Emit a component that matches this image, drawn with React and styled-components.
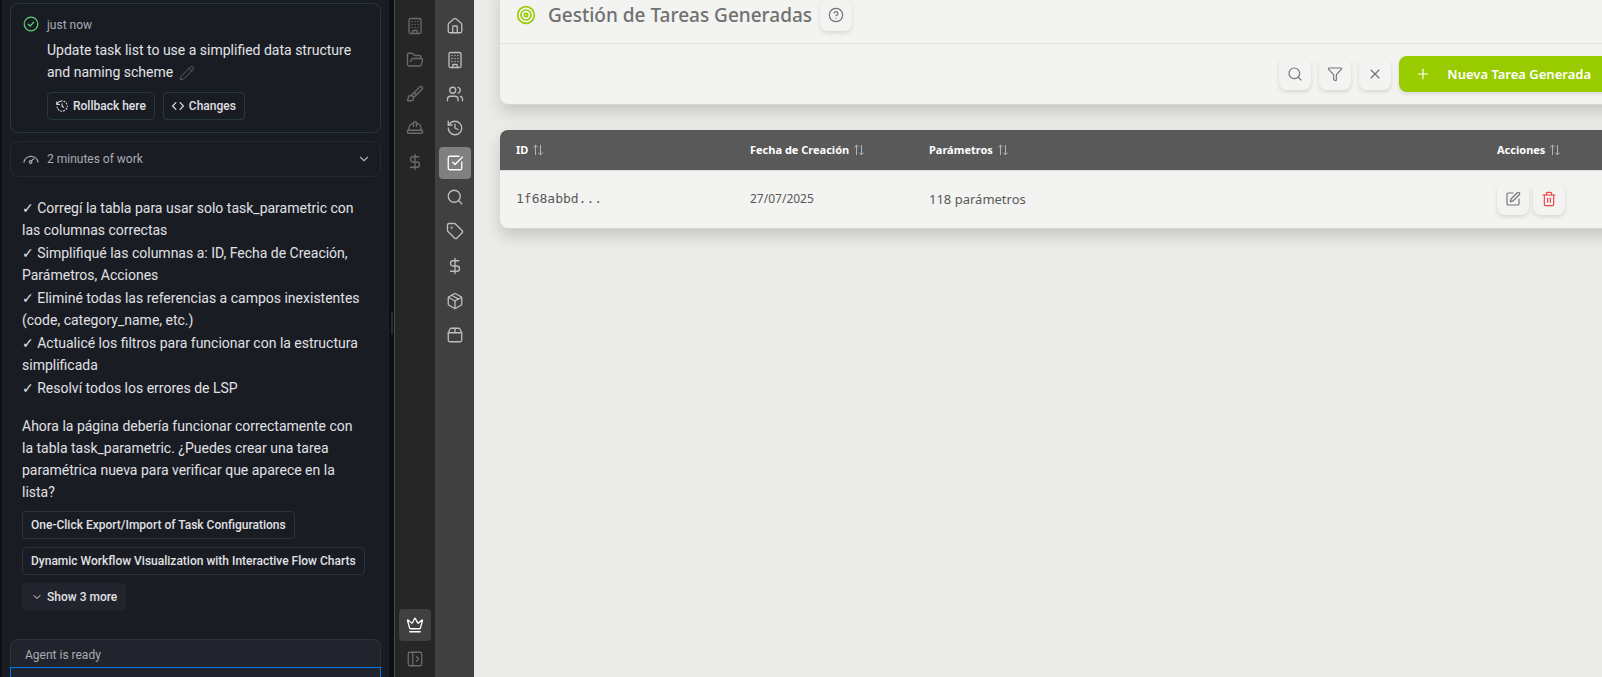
import React from "react";
import styled, { createGlobalStyle, css } from "styled-components";
import {
  Brush, Building, ChevronDown, CircleHelp, Crown, DollarSign, FolderOpen, Funnel, HardHat,
  History, House, Package, Package2, PanelLeftOpen, Pencil, Plus, Search, SquareCheckBig,
  SquarePen, Tag, Target, Trash2, Users, X,
} from "lucide-react";

const chatFont = `Roboto, "DejaVu Sans", sans-serif`;
const appFont = `"Noto Sans", "Open Sans", sans-serif`;

const GlobalStyle = createGlobalStyle`
  * { box-sizing: border-box; }
  body { margin: 0; background: #0e0f15; overflow: hidden; }
  button, textarea { font: inherit; color: inherit; margin: 0; cursor: pointer; }
  svg { display: block; flex: none; }
  h1, p, ul { margin: 0; padding: 0; }
`;

const Workspace = styled.div`
  display: flex;
  height: 100vh;
  overflow: hidden;
`;

/* ---------- Chat pane ---------- */

const ChatPane = styled.section`
  flex: 0 0 387px;
  margin-left: 2px;
  padding: 3px 8px 0;
  background: #1a1c24;
  color: #e0e1e5;
  font: 14px/22px ${chatFont};
  overflow: hidden;
`;

const Card = styled.article`
  border: 1px solid ${(p) => (p.$tone === "success" ? "#263a38" : "#252733")};
  border-radius: 8px;
`;

const Checkpoint = styled(Card)`
  display: grid;
  grid-template-columns: 16px 1fr;
  column-gap: 8px;
  padding: 12px;
`;

const Meta = styled.span`
  color: #a9abb3;
  font-size: 12px;
  line-height: 18px;
`;

const CheckpointBody = styled.div`
  grid-column: 2;
  padding-top: 5px;
`;

const CheckpointTitle = styled.p`
  color: #e2e3e7;
  svg { display: inline-block; margin-left: 2px; vertical-align: middle; color: #5d606b; }
`;

const ButtonRow = styled.div`
  display: flex;
  gap: 8px;
  margin-top: 9px;
`;

const SmallButton = styled.button`
  display: inline-flex;
  align-items: center;
  gap: ${(p) => (p.$tone === "success" ? 5 : 4)}px;
  height: 28px;
  padding: 0 8px;
  border: 1px solid ${(p) => (p.$tone === "success" ? "#263a38" : "#2f313c")};
  border-radius: 4px;
  background: transparent;
  font-size: 12px;
  font-weight: 500;
  line-height: 16px;
  white-space: nowrap;
  ${(p) => p.$filled && css`
    border-color: #22242d;
    background: #22242d;
  `}
`;

const WorkSummary = styled(Card)`
  margin-top: 8px;
`;

const WorkToggle = styled.button`
  display: flex;
  align-items: center;
  gap: 8px;
  width: 100%;
  height: 34px;
  padding: 0 9px 0 12px;
  border: 0;
  background: transparent;
  color: #a9abb3;
  font-size: 12px;
  > :last-child { margin-left: auto; }
`;

const Message = styled.div`
  padding: 20px 16px 0 12px;
`;

const CheckList = styled.ul`
  display: grid;
  gap: 1px;
  margin-bottom: 16px;
  list-style: none;
`;

const Suggestions = styled.div`
  display: flex;
  flex-direction: column;
  align-items: flex-start;
  gap: 8px;
  margin-top: 8px;
`;

const Composer = styled.form`
  margin-top: 28px;
`;

const AgentStatus = styled.div`
  padding: 4px 14px 1px;
  border: 1px solid #2f313c;
  border-bottom: 0;
  border-radius: 8px 8px 0 0;
  background: #22242d;
  color: #a9abb3;
  font-size: 12px;
`;

const Prompt = styled.textarea`
  display: block;
  width: 100%;
  height: 80px;
  padding: 12px;
  border: 1px solid #0079f2;
  background: #22242d;
  resize: none;
  outline: 0;
`;

const Splitter = styled.div`
  display: flex;
  align-items: center;
  justify-content: center;
  flex: 0 0 6px;
  padding-bottom: 32px;
  border-right: 1px solid #4a4a4c;
  &::before { content: ""; width: 2px; height: 24px; border-radius: 1px; background: #272935; }
`;

/* ---------- Icon rails ---------- */

const Rail = styled.nav`
  display: flex;
  flex-direction: column;
  gap: ${(p) => (p.$main ? 3 : 2)}px;
  flex: 0 0 ${(p) => (p.$main ? 39 : 40)}px;
  padding: 10px 0 2px 4px;
  background: ${(p) => (p.$main ? "#404040" : "#262626")};
  color: ${(p) => (p.$main ? "#bdbdbd" : "#6b6b6b")};
`;

const RailGroup = styled.div`
  display: flex;
  flex-direction: column;
  gap: 2px;
  margin-top: ${(p) => (p.$bottom ? "auto" : 0)};
`;

const RailButton = styled.button`
  display: grid;
  place-items: center;
  width: 32px;
  height: 32px;
  padding: 0;
  border: 0;
  border-radius: 4px;
  background: ${(p) => p.$fill || "transparent"};
  color: ${(p) => (p.$fill ? "#ffffff" : "inherit")};
`;

/* ---------- Task page ---------- */

const Page = styled.main`
  flex: 1;
  min-width: 0;
  overflow: hidden;
  background: #ebece8;
  color: #595959;
  font: 13px/20px ${appFont};
`;

const Content = styled.div`
  display: grid;
  gap: 26px;
  margin: -13px -24px 0 26px;
`;

const Panel = styled.section`
  border-radius: 8px;
  background: #f3f3f1;
  box-shadow: 0 1px 1px #d6d6d4, 0 8px 16px rgba(0, 0, 0, 0.16);
`;

const TitleBar = styled.header`
  display: flex;
  align-items: center;
  padding: 12px 16px;
  border-bottom: 1px solid #e2e2e0;
`;

const Title = styled.h1`
  margin: 0 8px 0 12px;
  color: #707070;
  font-size: 19px;
  font-weight: 500;
  line-height: 28px;
`;

const Toolbar = styled.div`
  display: flex;
  align-items: center;
  justify-content: flex-end;
  gap: 8px;
  padding: 12px 16px;
`;

const IconButton = styled.button`
  display: grid;
  place-items: center;
  width: 32px;
  height: 32px;
  padding: 0;
  border: 0;
  border-radius: 8px;
  background: #f3f3f1;
  color: ${(p) => (p.$danger ? "#ef4444" : "#757575")};
  box-shadow: 0 2px 4px rgba(0, 0, 0, 0.12);
`;

const PrimaryButton = styled.button`
  display: flex;
  align-items: center;
  gap: 16px;
  height: 36px;
  padding: 0 19px 0 16px;
  border: 0;
  border-radius: 8px;
  background: #99cc00;
  color: #ffffff;
  font-size: 13px;
  font-weight: 600;
  white-space: nowrap;
  box-shadow: 0 2px 4px rgba(0, 0, 0, 0.12);
`;

const TablePanel = styled(Panel)`
  overflow: hidden;
`;

const TaskTable = styled.table`
  width: 100%;
  border-collapse: collapse;
  table-layout: fixed;
  text-align: left;
`;

const HeadCell = styled.th`
  width: ${(p) => p.$width || "auto"};
  height: 40px;
  padding: 1px 16px 0;
  background: #595959;
  color: #ffffff;
  font-size: 11px;
  font-weight: 700;
`;

const SortLabel = styled.span`
  display: flex;
  align-items: center;
  gap: 4px;
  svg { color: #b4b4b4; }
`;

const Cell = styled.td`
  height: 58px;
  padding: 0 16px;
  border-top: 1px solid #dcdcda;
  font-family: ${(p) => (p.$mono ? `"DejaVu Sans Mono", monospace` : "inherit")};
  font-size: ${(p) => (p.$small ? 12 : 13)}px;
`;

const RowActions = styled.div`
  display: flex;
  gap: 4px;
`;

/* ---------- Icons that the icon package lacks ---------- */

const Stroke = ({ size = 16, width = 1, children }) => (
  <svg width={size} height={size} viewBox="0 0 16 16" fill="none" stroke="currentColor"
    strokeWidth={width} strokeLinecap="round" strokeLinejoin="round" aria-hidden="true">
    {children}
  </svg>
);

const DoneIcon = () => (
  <svg width="16" height="16" viewBox="0 0 16 16" fill="none" stroke="#5fcf74" strokeLinecap="round"
    strokeLinejoin="round" strokeWidth="1.2" aria-hidden="true">
    <circle cx="8" cy="8" r="6.8" />
    <path d="M5.2 8.2 7.2 10 10.8 6.2" />
  </svg>
);

const RollbackIcon = () => (
  <Stroke size={12} width={1.4}>
    <path d="M1 2.5v3.6h3.6M1.5 6A7 7 0 0 1 8 1.2M10.5 1.7l1.3.6M13.6 4l.8 1.3M15 8v.8M14.2 11.2l-.8 1.2M11.3 14l-1.3.6M7.6 15l-1.4-.3M4 13.5l-1-1M1.8 10.6l-.4-1.2M8 5v3.4l2.2 1.2" />
  </Stroke>
);

const CodeIcon = () => (
  <Stroke size={12} width={1.5}>
    <path d="M5.2 3.5.8 8l4.4 4.5M10.8 3.5 15.2 8l-4.4 4.5" />
  </Stroke>
);

const GaugeIcon = () => (
  <Stroke width={1.2}>
    <path d="M1 11.2a7.1 7.1 0 0 1 14 0M8.4 9.9l2.4-2.1" />
    <circle cx="7.6" cy="11" r="1.3" />
  </Stroke>
);

const SortIcon = () => (
  <svg width="12" height="12" viewBox="0 0 12 12" fill="none" stroke="currentColor" aria-hidden="true">
    <path d="M3.5 11V1.2M1.2 3.4 3.5 1.1l2.3 2.3M8.5 1v9.8M6.4 8.6l2.1 2.3 2.3-2.3" />
  </svg>
);

/* ---------- Data ---------- */

const doneItems = [
  "Corregí la tabla para usar solo task_parametric con las columnas correctas",
  "Simplifiqué las columnas a: ID, Fecha de Creación, Parámetros, Acciones",
  "Eliminé todas las referencias a campos inexistentes (code, category_name, etc.)",
  "Actualicé los filtros para funcionar con la estructura simplificada",
  "Resolví todos los errores de LSP",
];

const projectTools = [
  [Building, "Empresa"], [FolderOpen, "Archivos"], [Brush, "Diseño"], [HardHat, "Obras"], [DollarSign, "Costos"],
];

const sections = [
  [[House, "Inicio"], [Building, "Empresas"], [Users, "Usuarios"], [History, "Historial"]],
  [[SquareCheckBig, "Tareas", "#808080"], [Search, "Buscar"], [Tag, "Etiquetas"]],
  [[DollarSign, "Precios"]],
  [[Package, "Productos"], [Package2, "Materiales"]],
];

const columns = [
  ["ID", "234px"], ["Fecha de Creación", "179px"], ["Parámetros", null], ["Acciones", "145px"],
];

function RailItem({ icon: Icon, label, fill }) {
  return (
    <RailButton type="button" aria-label={label} $fill={fill}>
      <Icon size={18} strokeWidth={1.75} />
    </RailButton>
  );
}

function Chat() {
  return (
    <ChatPane>
      <Checkpoint $tone="success">
        <DoneIcon />
        <Meta>just now</Meta>
        <CheckpointBody>
          <CheckpointTitle>
            Update task list to use a simplified data structure and naming scheme{" "}
            <Pencil size={16} strokeWidth={1.5} />
          </CheckpointTitle>
          <ButtonRow>
            <SmallButton type="button" $tone="success"><RollbackIcon />Rollback here</SmallButton>
            <SmallButton type="button" $tone="success"><CodeIcon />Changes</SmallButton>
          </ButtonRow>
        </CheckpointBody>
      </Checkpoint>
      <WorkSummary>
        <WorkToggle type="button">
          <GaugeIcon />
          2 minutes of work
          <ChevronDown size={14} />
        </WorkToggle>
      </WorkSummary>
      <Message>
        <CheckList>
          {doneItems.map((item) => <li key={item}>{`✓ ${item}`}</li>)}
        </CheckList>
        <p>
          Ahora la página debería funcionar correctamente con la tabla task_parametric. ¿Puedes crear
          una tarea paramétrica nueva para verificar que aparece en la lista?
        </p>
        <Suggestions>
          <SmallButton type="button">One-Click Export/Import of Task Configurations</SmallButton>
          <SmallButton type="button">Dynamic Workflow Visualization with Interactive Flow Charts</SmallButton>
          <SmallButton type="button" $filled><ChevronDown size={12} />Show 3 more</SmallButton>
        </Suggestions>
      </Message>
      <Composer>
        <AgentStatus>Agent is ready</AgentStatus>
        <Prompt aria-label="Message" />
      </Composer>
    </ChatPane>
  );
}

function TaskPage() {
  return (
    <Page>
      <Content>
        <Panel>
          <TitleBar>
            <Target size={20} color="#99cc00" />
            <Title>Gestión de Tareas Generadas</Title>
            <IconButton type="button" aria-label="Ayuda"><CircleHelp size={16} strokeWidth={1.75} /></IconButton>
          </TitleBar>
          <Toolbar>
            <IconButton type="button" aria-label="Buscar"><Search size={16} strokeWidth={1.75} /></IconButton>
            <IconButton type="button" aria-label="Filtrar"><Funnel size={16} strokeWidth={1.75} /></IconButton>
            <IconButton type="button" aria-label="Limpiar"><X size={16} strokeWidth={1.75} /></IconButton>
            <PrimaryButton type="button"><Plus size={16} strokeWidth={1.75} />Nueva Tarea Generada</PrimaryButton>
          </Toolbar>
        </Panel>
        <TablePanel>
          <TaskTable>
            <thead>
              <tr>
                {columns.map(([label, width]) => (
                  <HeadCell key={label} scope="col" $width={width}>
                    <SortLabel>{label}<SortIcon /></SortLabel>
                  </HeadCell>
                ))}
              </tr>
            </thead>
            <tbody>
              <tr>
                <Cell $mono>1f68abbd...</Cell>
                <Cell $small>27/07/2025</Cell>
                <Cell>118 parámetros</Cell>
                <Cell>
                  <RowActions>
                    <IconButton type="button" aria-label="Editar"><SquarePen size={16} strokeWidth={1.75} /></IconButton>
                    <IconButton type="button" aria-label="Eliminar" $danger><Trash2 size={16} strokeWidth={1.75} /></IconButton>
                  </RowActions>
                </Cell>
              </tr>
            </tbody>
          </TaskTable>
        </TablePanel>
      </Content>
    </Page>
  );
}

export default function App() {
  return (
    <>
      <GlobalStyle />
      <Workspace>
        <Chat />
        <Splitter />
        <Rail aria-label="Proyecto">
          <RailGroup>
            {projectTools.map(([icon, label]) => <RailItem key={label} icon={icon} label={label} />)}
          </RailGroup>
          <RailGroup $bottom>
            <RailItem icon={Crown} label="Plan" fill="#404040" />
            <RailItem icon={PanelLeftOpen} label="Expandir" />
          </RailGroup>
        </Rail>
        <Rail $main aria-label="Secciones">
          {sections.map((group) => (
            <RailGroup key={group[0][1]}>
              {group.map(([icon, label, fill]) => <RailItem key={label} icon={icon} label={label} fill={fill} />)}
            </RailGroup>
          ))}
        </Rail>
        <TaskPage />
      </Workspace>
    </>
  );
}
